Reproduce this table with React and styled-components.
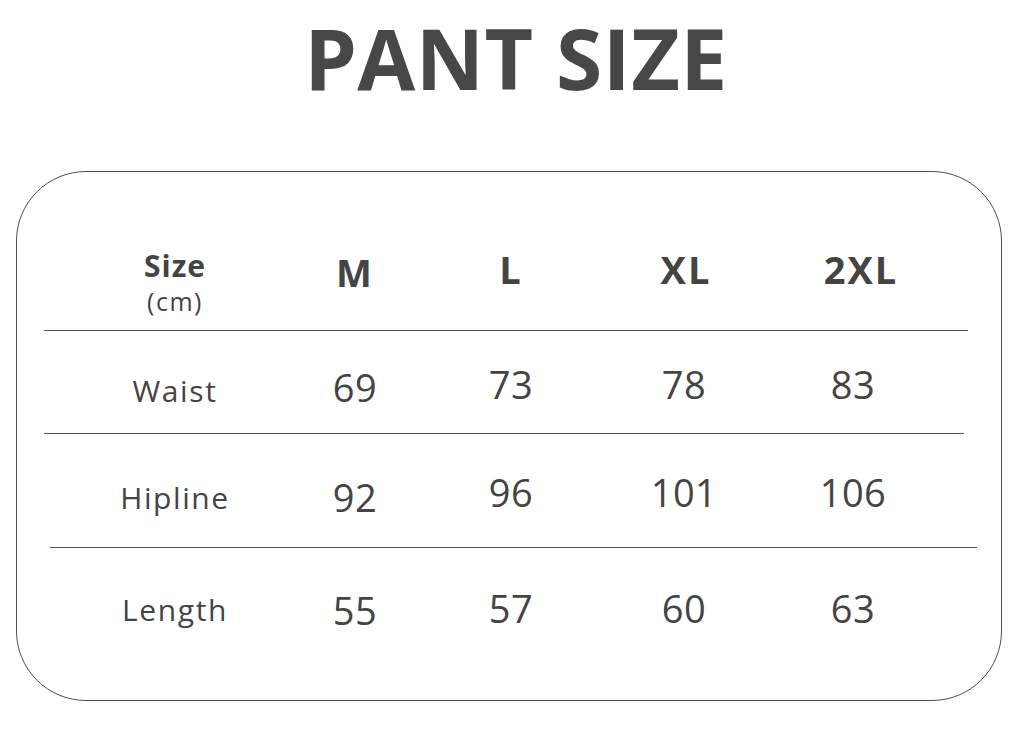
import React from 'react';
import styled, { createGlobalStyle } from 'styled-components';

const GlobalStyle = createGlobalStyle`
  html, body {
    margin: 0;
    padding: 0;
    background: #fff;
  }
  body {
    font-family: "Open Sans", "Noto Sans", "Liberation Sans", sans-serif;
    color: #454545;
  }
`;

const Page = styled.div`
  width: 1024px;
  height: 739px;
  display: flex;
  flex-direction: column;
  align-items: flex-start;
  overflow: hidden;
`;

const Title = styled.h1`
  align-self: center;
  margin: 0 0 0 8px;
  font-size: 84px;
  font-weight: 700;
  line-height: normal;
  color: #474747;
  letter-spacing: 0.5px;
`;

const Card = styled.div`
  box-sizing: border-box;
  width: 986px;
  height: 530px;
  margin: 56px 0 0 16px;
  border: 1px solid #4d4d4d;
  border-radius: 70px;
  display: flex;
  flex-direction: column;
`;

const Row = styled.div`
  display: grid;
  grid-template-columns: 262px 98px 214px 132px 206px;
  padding: ${p => p.$pad}px 0 0 27px;
  height: ${p => p.$height}px;
  box-sizing: border-box;
  align-items: start;
`;

const Divider = styled.div`
  height: 1px;
  background: #555;
  margin: 0 ${p => p.$right}px 0 ${p => p.$left}px;
`;

const Label = styled.div`
  justify-self: center;
  font-size: 30px;
  line-height: 1;
  letter-spacing: ${p => (p.$bold ? 1 : 1.6)}px;
  margin-top: ${p => p.$drop || 0}px;
  font-weight: ${p => (p.$bold ? 700 : 400)};
  color: #444;
  text-align: center;
`;

const Unit = styled.div`
  font-size: 25px;
  font-weight: 400;
  line-height: 1;
  letter-spacing: 1.5px;
  margin-top: 8px;
`;

const Value = styled.div`
  justify-self: center;
  font-size: 38px;
  line-height: 1;
  font-weight: ${p => (p.$bold ? 700 : 400)};
  letter-spacing: ${p => (p.$bold ? 2 : 0.5)}px;
  margin-left: ${p => (p.$nudge || 0) * 2}px;
  color: #444;

  &:nth-child(2) {
    margin-top: ${p => p.$first || 0}px;
  }
`;

const sizes = [
  { name: 'M', nudge: 0 },
  { name: 'L', nudge: 0 },
  { name: 'XL', nudge: 2 },
  { name: '2XL', nudge: 8 },
];

const rows = [
  { name: 'Waist', values: [69, 73, 78, 83], height: 102, pad: 34, drop: 11, first: 3 },
  { name: 'Hipline', values: [92, 96, 101, 106], height: 113, pad: 39, drop: 10, first: 5 },
  { name: 'Length', values: [55, 57, 60, 63], height: 152, pad: 41, drop: 6, first: 2 },
];

const dividers = [
  { left: 27, right: 33 },
  { left: 27, right: 37 },
  { left: 33, right: 24 },
];

const App = () => (
  <Page>
    <GlobalStyle />
    <Title>PANT SIZE</Title>
    <Card>
      <Row $height={158} $pad={78}>
        <Label $bold $drop={1}>
          Size
          <Unit>(cm)</Unit>
        </Label>
        {sizes.map(s => (
          <Value key={s.name} $bold $first={3} $nudge={s.nudge}>
            {s.name}
          </Value>
        ))}
      </Row>
      {rows.map((row, i) => (
        <React.Fragment key={row.name}>
          <Divider $left={dividers[i].left} $right={dividers[i].right} />
          <Row $height={row.height} $pad={row.pad}>
            <Label $drop={row.drop}>{row.name}</Label>
            {row.values.map(v => (
              <Value key={v} $first={row.first}>
                {v}
              </Value>
            ))}
          </Row>
        </React.Fragment>
      ))}
    </Card>
  </Page>
);

export default App;
